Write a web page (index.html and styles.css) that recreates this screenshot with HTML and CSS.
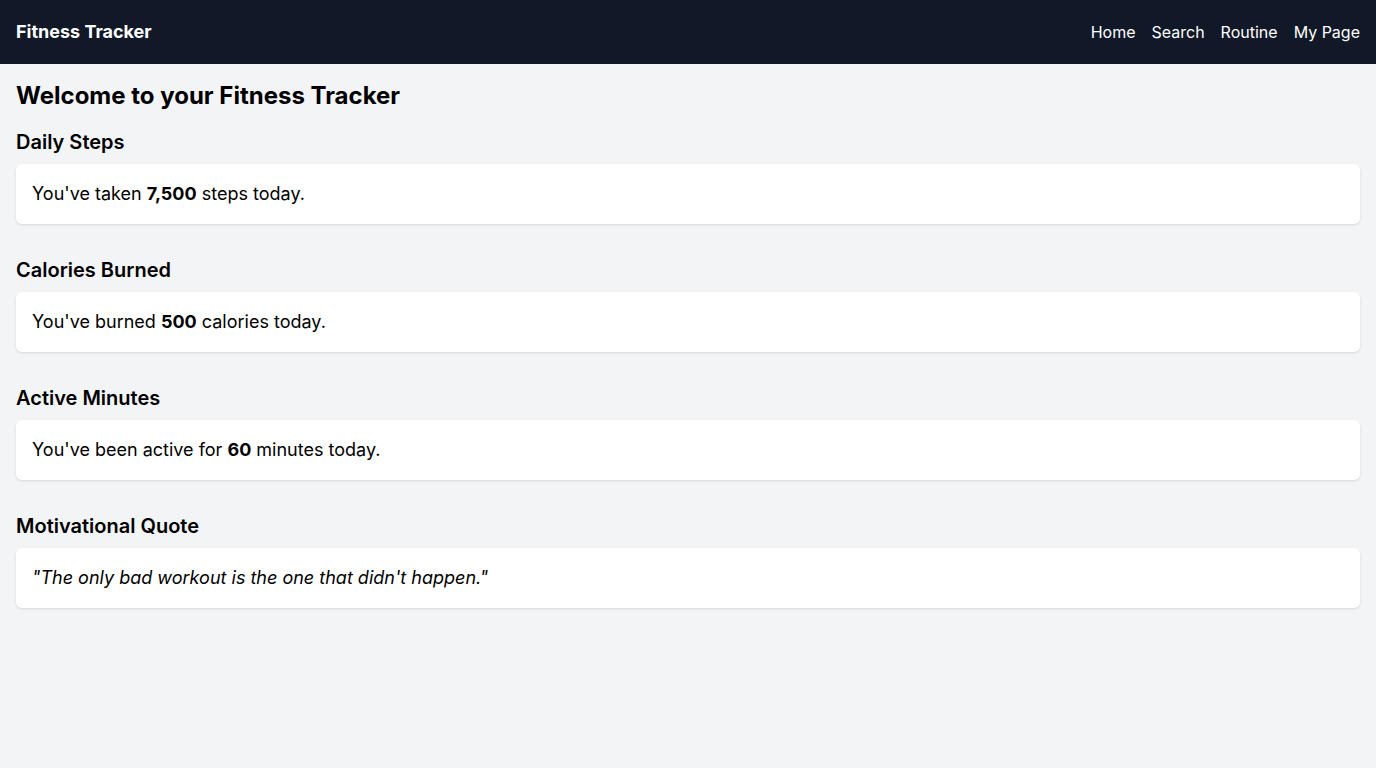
FILE: index.html
```html
<!DOCTYPE html>
<html lang="en">
<head>
<meta charset="utf-8">
<title>Fitness Tracker</title>
<link rel="stylesheet" href="styles.css">
</head>
<body>
<header class="topbar">
  <div class="brand">Fitness Tracker</div>
  <nav class="nav">
    <a href="#">Home</a>
    <a href="#">Search</a>
    <a href="#">Routine</a>
    <a href="#">My Page</a>
  </nav>
</header>
<main class="main">
  <h1 class="page-title">Welcome to your Fitness Tracker</h1>
  <section class="section">
    <h2 class="section-title">Daily Steps</h2>
    <div class="card"><p>You've taken <strong>7,500</strong> steps today.</p></div>
  </section>
  <section class="section">
    <h2 class="section-title">Calories Burned</h2>
    <div class="card"><p>You've burned <strong>500</strong> calories today.</p></div>
  </section>
  <section class="section">
    <h2 class="section-title">Active Minutes</h2>
    <div class="card"><p>You've been active for <strong>60</strong> minutes today.</p></div>
  </section>
  <section class="section">
    <h2 class="section-title">Motivational Quote</h2>
    <div class="card"><p class="quote">"The only bad workout is the one that didn't happen."</p></div>
  </section>
</main>
</body>
</html>
```
FILE: styles.css
```css
* { box-sizing: border-box; }
html, body { margin: 0; padding: 0; }
body {
  font-family: Inter, "Noto Sans", sans-serif;
  background: #f3f4f6;
  color: #000;
  min-height: 100vh;
}
.topbar {
  height: 64px;
  background: #111827;
  color: #fff;
  display: flex;
  align-items: center;
  justify-content: space-between;
  padding: 0 16px;
}
.brand {
  font-size: 18px;
  line-height: 28px;
  font-weight: 700;
}
.nav {
  display: flex;
  gap: 16px;
}
.nav a {
  color: #fff;
  text-decoration: none;
  font-size: 16px;
  line-height: 24px;
}
.main {
  padding: 16px;
}
.page-title {
  margin: 0 0 16px;
  font-size: 24px;
  line-height: 32px;
  font-weight: 700;
}
.section {
  margin-bottom: 32px;
}
.section-title {
  margin: 0 0 8px;
  font-size: 20px;
  line-height: 28px;
  font-weight: 600;
}
.card {
  background: #fff;
  border-radius: 6px;
  box-shadow: 0 1px 3px 0 rgba(0,0,0,0.1), 0 1px 2px -1px rgba(0,0,0,0.1);
  padding: 16px;
}
.card p {
  margin: 0;
  font-size: 18px;
  line-height: 28px;
}
.card strong { font-weight: 700; }
.quote { font-style: italic; }
```
